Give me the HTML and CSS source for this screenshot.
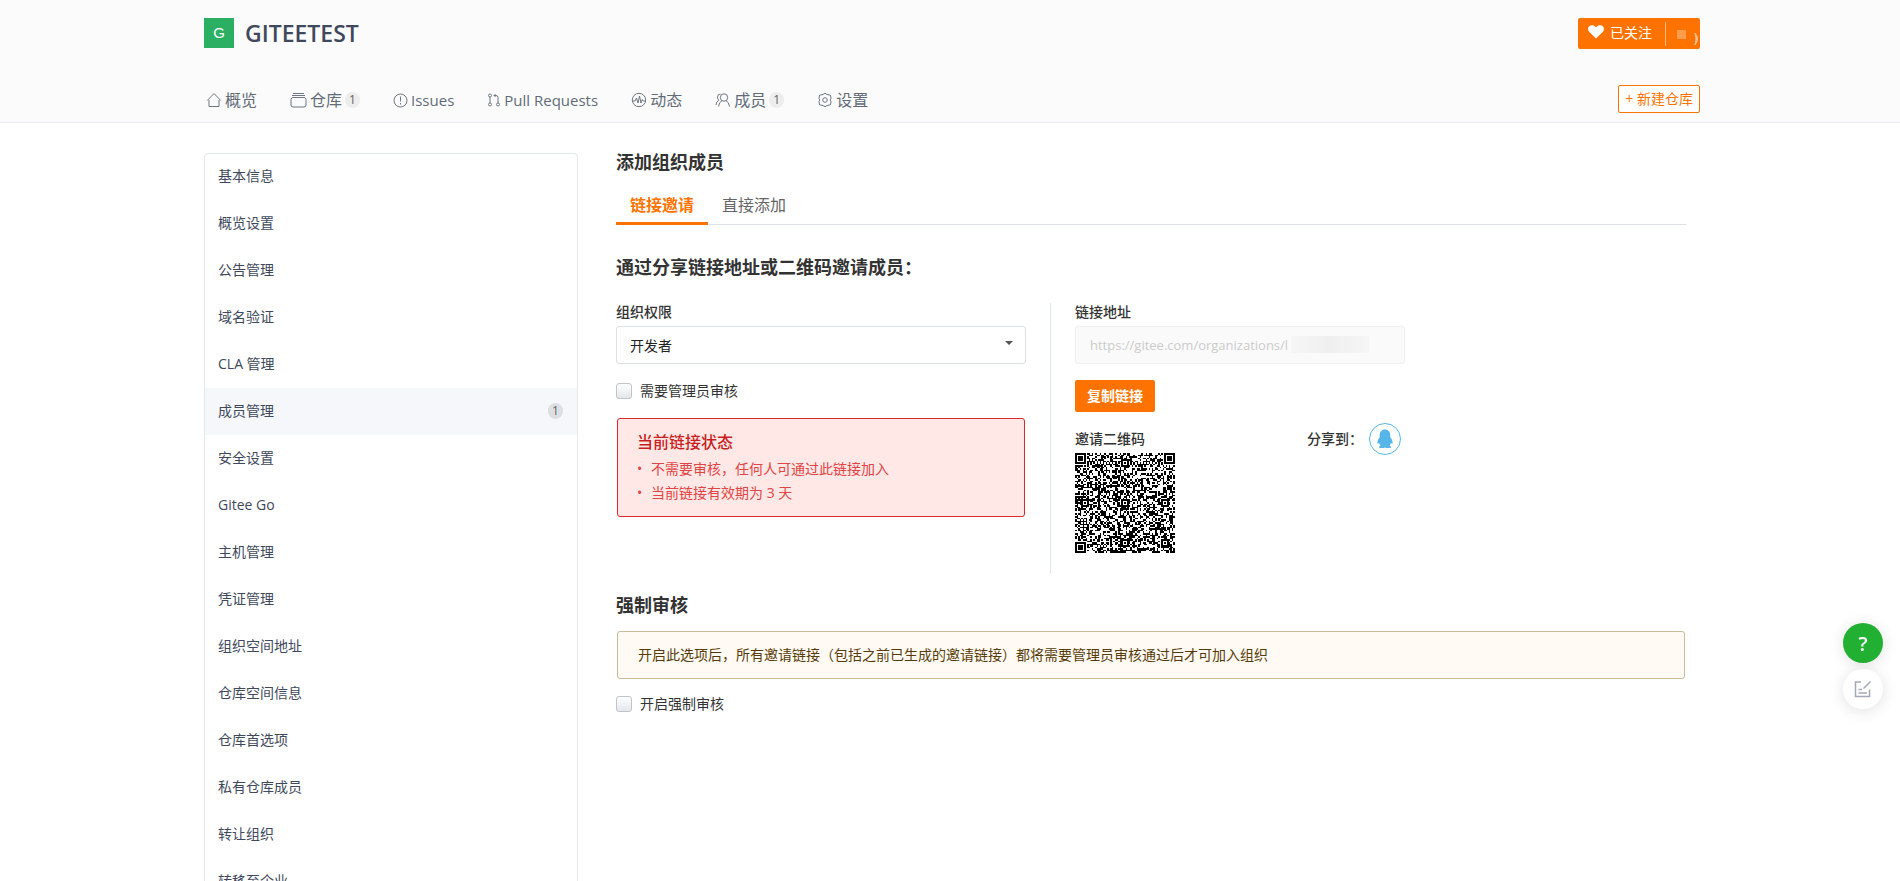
FILE: index.html
```
<!DOCTYPE html>
<html lang="zh-CN">
  <head>
    <meta charset="UTF-8" />
    <meta name="viewport" content="width=device-width, initial-scale=1.0" />
    <title>添加组织成员 - GITEETEST</title>
    <link rel="stylesheet" href="styles.css" />
  </head>
  <body>
    <header class="group-header">
      <div class="container">
        <div class="header-top">
          <h1 class="group-title"><span class="avatar">G</span><a href="#">GITEETEST</a></h1>
          <div class="follow">
            <button class="follow-btn" type="button">
              <svg width="16" height="14" viewBox="0 0 16 14" fill="#fff"><path d="M8 13.5 1.3 7C-.4 5.200-.3 2.600 1.200 1.200 3-.4 6-.3 8 2.200c2-2.500 5-2.600 6.800-1 1.500 1.400 1.600 4-.1 5.800z" /></svg>
              已关注
            </button>
            <button class="follow-count" type="button" aria-label="关注人数">
              <svg width="22" height="24" viewBox="0 0 22 24"><rect x="0" y="8" width="9" height="9" fill="#ff9d4d" /><path d="M18 11q5 5.500 0 12 2-6 0-12z" fill="#ffc18f" stroke="#ffc18f" /></svg>
            </button>
          </div>
        </div>
        <div class="header-bottom">
          <nav class="nav">
            <a href="#"><svg width="16" height="16" viewBox="0 0 16 16"><path d="M3 8v6.500h10V8M1.200 8.500 8 1.500l6.800 7" /></svg>概览</a>
            <a href="#"><svg width="17" height="16" viewBox="0 0 17 16"><path d="M3 1.500h11M2 3.500h13" /><rect x="1" y="5.500" width="15" height="9.500" rx="2" /></svg>仓库<span class="badge">1</span></a>
            <a href="#" class="latin"><svg width="15" height="16" viewBox="0 0 15 16"><circle cx="7.500" cy="8.500" r="6.500" /><path d="M7.500 4.500v5M7.500 11v1.500" /></svg>Issues</a>
            <a href="#" class="latin"><svg width="14" height="16" viewBox="0 0 14 16"><circle cx="3" cy="3.500" r="1.500" /><circle cx="3" cy="12.500" r="1.500" /><circle cx="11" cy="12.500" r="1.500" /><path d="M3 5v6M11 11V5.500q0-2-2-2H7M8.500 2 7 3.500 8.500 5" /></svg>Pull Requests</a>
            <a href="#"><svg width="16" height="16" viewBox="0 0 16 16"><circle cx="8" cy="8" r="6.700" /><path d="M1.500 9H4l1.500-3L7 11l1.500-7L10 11l1.300-3.500.9 1.500h2.300" /></svg>动态</a>
            <a href="#"><svg width="16" height="16" viewBox="0 0 16 16"><circle cx="9" cy="5.500" r="3.700" /><path d="M3.500 14.500q.5-4.500 3.500-5.700M14.500 14.500q-.5-4.500-3.500-5.700M5.500 2Q2.500 2 2.500 5q0 2 1.300 3.200Q1.200 9.500 1 13" /></svg>成员<span class="badge">1</span></a>
            <a href="#"><svg width="16" height="16" viewBox="0 0 16 16"><path d="m8 1.200 2 1.300 3.500.7.500 3.300-.9 1.500.9 1.500-.5 3.300-3.500.7-2 1.300-2-1.300-3.500-.7L2 9.500 2.900 8 2 6.500l.5-3.300L6 2.500z" /><circle cx="8" cy="8" r="2.300" /></svg>设置</a>
          </nav>
          <a href="#" class="new-repo">+ 新建仓库</a>
        </div>
      </div>
    </header>

    <div class="container main">
      <aside class="sidebar">
        <a href="#">基本信息</a>
        <a href="#">概览设置</a>
        <a href="#">公告管理</a>
        <a href="#">域名验证</a>
        <a href="#">CLA 管理</a>
        <a href="#" class="active">成员管理<span class="badge">1</span></a>
        <a href="#">安全设置</a>
        <a href="#">Gitee Go</a>
        <a href="#">主机管理</a>
        <a href="#">凭证管理</a>
        <a href="#">组织空间地址</a>
        <a href="#">仓库空间信息</a>
        <a href="#">仓库首选项</a>
        <a href="#">私有仓库成员</a>
        <a href="#">转让组织</a>
        <a href="#">转移至企业</a>
      </aside>

      <main class="content">
        <h2>添加组织成员</h2>
        <div class="tabs">
          <a href="#" class="active">链接邀请</a>
          <a href="#">直接添加</a>
        </div>

        <h2>通过分享链接地址或二维码邀请成员：</h2>
        <div class="invite">
          <div class="invite-left">
            <label class="field-label" for="role">组织权限</label>
            <div class="select-wrap">
              <select id="role">
                <option>开发者</option>
                <option>管理员</option>
              </select>
            </div>
            <div class="check">
              <input type="checkbox" id="need-check" />
              <label for="need-check">需要管理员审核</label>
            </div>
            <div class="status">
              <h3>当前链接状态</h3>
              <ul>
                <li>不需要审核，任何人可通过此链接加入</li>
                <li>当前链接有效期为 3 天</li>
              </ul>
            </div>
          </div>
          <div class="invite-right">
            <label class="field-label" for="link">链接地址</label>
            <div class="link-wrap">
              <input type="text" id="link" value="https://gitee.com/organizations/l" disabled />
              <span class="link-mask"></span>
            </div>
            <button class="copy-btn" type="button">复制链接</button>
            <div class="share-row">
              <div class="qr">
                <span class="field-label">邀请二维码</span>
                <svg id="qrcode" width="100" height="100" viewBox="0 0 65 65" shape-rendering="crispEdges"></svg>
              </div>
              <div class="share">
                <span class="share-label">分享到：</span>
                <a href="#" class="qq" aria-label="QQ">
                  <svg width="18" height="20" viewBox="0 0 18 20" fill="#56b6e7"><path d="M9 .5c3.400 0 5.300 2.500 5.300 5.500v2.200c1.600 2 2.500 4 2.300 5.800-.1 1-.9.900-1.600-.3-.3 1.200-.7 2-1.400 2.800 1.200.5 1.500 1.200 1.200 1.900-.5.900-4.300.9-5.800 0-1.500.9-5.300.9-5.800 0-.3-.7 0-1.400 1.200-1.900-.7-.8-1.100-1.600-1.400-2.800-.7 1.200-1.500 1.300-1.600.3-.2-1.800.7-3.800 2.300-5.800V6C3.700 3 5.600.5 9 .5z" /></svg>
                </a>
              </div>
            </div>
          </div>
        </div>

        <h2>强制审核</h2>
        <div class="notice">开启此选项后，所有邀请链接（包括之前已生成的邀请链接）都将需要管理员审核通过后才可加入组织</div>
        <div class="check">
          <input type="checkbox" id="force-check" />
          <label for="force-check">开启强制审核</label>
        </div>
      </main>
    </div>

    <div class="float-tools">
      <button class="help" type="button">?</button>
      <button class="feedback" type="button" aria-label="反馈">
        <svg width="18" height="18" viewBox="0 0 18 18" fill="none" stroke="#a4a9b8" stroke-width="1.500"><path d="M7 2H1.500v14.500h14V9.500M9.500 8.500l7-7M4.500 9.500H8M4.500 13h8.500" /></svg>
      </button>
    </div>

    <script src="script.js"></script>
  </body>
</html>
```

FILE: styles.css
```
* {
  box-sizing: border-box;
}

body {
  margin: 0;
  font-family: "Open Sans", "Noto Sans CJK SC", sans-serif;
  font-size: 14px;
  line-height: 20px;
  color: #333;
  background: #fff;
}

a {
  color: inherit;
  text-decoration: none;
}

button,
input,
select {
  font-family: inherit;
}

h2 {
  margin: 0;
  font-size: 18px;
  line-height: 24px;
  font-weight: bold;
}

.container {
  max-width: 1500px;
  margin: 0 auto;
  padding-left: 4px;
}

/* Header */
.group-header {
  background: #fbfbfb;
  border-bottom: 1px solid #e6e9ed;
}

.header-top {
  display: flex;
  justify-content: space-between;
  align-items: flex-start;
  height: 50px;
  padding-top: 18px;
}

.group-title {
  display: flex;
  align-items: center;
  gap: 11px;
  margin: 0;
  font-size: 23px;
  line-height: 30px;
  font-weight: 600;
  color: #40485b;
}

.avatar {
  width: 30px;
  height: 30px;
  background: #2baf63;
  color: #fff;
  font-size: 15px;
  font-weight: normal;
  line-height: 30px;
  text-align: center;
  font-family: "Liberation Sans", sans-serif;
}

.follow {
  display: flex;
  align-items: center;
  height: 31px;
  border-radius: 2px;
  background: #fe7300;
}

.follow-btn {
  display: flex;
  align-items: center;
  gap: 6px;
  height: 24px;
  padding: 0 13px 4px 10px;
  border: none;
  border-right: 1px solid #ffb980;
  background: none;
  color: #fff;
  font-size: 14px;
  white-space: nowrap;
}

.follow-count {
  height: 24px;
  padding: 0 1px 0 11px;
  border: none;
  background: none;
}

.follow-count svg {
  display: block;
}

.header-bottom {
  display: flex;
  justify-content: space-between;
  align-items: flex-start;
  height: 72px;
  padding-top: 35px;
}

.nav {
  display: flex;
  gap: 33px;
  padding-left: 2px;
  font-size: 16px;
  line-height: 30px;
  color: #626b77;
}

.nav a {
  display: flex;
  align-items: center;
  gap: 3px;
}

.nav .latin {
  font-size: 15px;
}

.nav svg {
  fill: none;
  stroke: #6f7782;
  stroke-width: 1;
}

.badge {
  width: 15px;
  height: 16px;
  border-radius: 8px;
  background: #ededed;
  font-size: 12px;
  line-height: 16px;
  text-align: center;
  color: #666;
}

.new-repo {
  height: 28px;
  padding: 0 6px;
  border: 1px solid #fe7300;
  border-radius: 2px;
  background: #fff;
  color: #fe7300;
  line-height: 26px;
}

/* Page body */
.main {
  display: flex;
  align-items: flex-start;
  height: calc(100vh - 123px);
  padding-top: 30px;
  overflow: hidden;
}

.sidebar {
  width: 25%;
  border: 1px solid #e3e9ed;
  border-radius: 4px;
  color: #40485b;
}

.sidebar a {
  display: flex;
  justify-content: space-between;
  align-items: center;
  height: 47px;
  padding: 0 14px 2px 13px;
}

.sidebar a:first-child {
  height: 46px;
}

.sidebar .active {
  background: #f5f7fa;
}

.sidebar .badge {
  background: #dcdfe3;
}

.content {
  flex: 1;
  margin-top: -3px;
  padding: 0 14px 0 38px;
}

.tabs {
  display: flex;
  margin: 13px 0 30px;
  border-bottom: 1px solid #dce3e8;
  font-size: 16px;
  line-height: 22px;
  color: #666;
}

.tabs a {
  margin-bottom: -1px;
  padding: 7px 14px 6px;
  border-bottom: 3px solid transparent;
}

.tabs .active {
  border-bottom-color: #fe7300;
  color: #fe7300;
  font-weight: bold;
}

.invite {
  display: flex;
  margin: 24px 0 19px;
}

.invite-left {
  width: 435px;
  padding-right: 24px;
  border-right: 1px solid #dfe6ec;
  min-height: 271px;
}

.invite-right {
  width: 354px;
  padding-left: 24px;
}

.field-label {
  display: block;
  line-height: 18px;
  font-weight: 500;
}

.select-wrap {
  position: relative;
  margin: 5px 0 16px;
}

/* Caret of the dropdown */
.select-wrap::after {
  content: "";
  position: absolute;
  right: 13px;
  top: 15px;
  border: 4px solid transparent;
  border-top-color: #555;
  border-bottom: none;
}

select {
  appearance: none;
  display: block;
  width: 100%;
  height: 38px;
  padding: 0 13px;
  border: 1px solid #dce0e8;
  border-radius: 3px;
  background: #fff;
  color: #222;
  font-size: 14px;
}

.check {
  display: flex;
  align-items: center;
  gap: 8px;
  height: 22px;
}

.check input {
  appearance: none;
  width: 16px;
  height: 16px;
  margin: 0;
  border: 1px solid #c1c4c9;
  border-radius: 3px;
  background: linear-gradient(#fff, #e3e6eb);
}

.status {
  margin: 16px 1px 0;
  padding: 12px 19px 11px;
  border: 1px solid #db2828;
  border-radius: 3px;
  background: #ffe8e6;
  color: #e04545;
}

.status h3 {
  margin: 0 0 4px;
  font-size: 16px;
  line-height: 22px;
  font-weight: 500;
  color: #c81e1e;
}

.status ul {
  margin: 0;
  padding-left: 14px;
  line-height: 24px;
  list-style: none;
}

.status li::before {
  content: "•";
  float: left;
  margin-left: -14px;
}

.link-wrap {
  position: relative;
  margin: 5px 0 16px;
}

.link-wrap input {
  display: block;
  width: 100%;
  height: 38px;
  padding: 0 14px;
  border: 1px solid #eef0f2;
  border-radius: 3px;
  background: #fafafa;
  color: #ccc;
  font-size: 13px;
}

.link-mask {
  position: absolute;
  left: 216px;
  top: 10px;
  width: 78px;
  height: 17px;
  background: linear-gradient(90deg, #f6f6f6, #efefef 50%, #f6f6f6);
}

.copy-btn {
  display: block;
  height: 32px;
  padding: 0 12px 2px;
  border: none;
  border-radius: 2px;
  background: #fe7300;
  color: #fff;
  font-size: 14px;
  font-weight: bold;
}

.share-row {
  display: flex;
  justify-content: space-between;
  margin-top: 11px;
  padding-right: 4px;
}

.qr {
  padding-top: 7px;
}

.qr svg {
  display: block;
  margin-top: 5px;
}

.share {
  display: flex;
  align-items: flex-start;
  gap: 6px;
}

.share-label {
  line-height: 32px;
  font-weight: 500;
}

.qq {
  display: flex;
  align-items: center;
  justify-content: center;
  width: 32px;
  height: 32px;
  border: 1px solid #56b6e7;
  border-radius: 50%;
}

.notice {
  margin: 14px 1px;
  padding: 13px 20px;
  border: 1px solid #c9ba9b;
  border-radius: 3px;
  background: #fffaf3;
  color: #573a08;
}

/* Floating buttons */
.float-tools {
  position: fixed;
  right: 17px;
  bottom: 172px;
  display: flex;
  flex-direction: column;
  gap: 6px;
}

.float-tools button {
  display: flex;
  align-items: center;
  justify-content: center;
  width: 40px;
  height: 40px;
  padding: 0;
  border: none;
  border-radius: 50%;
  background: #fff;
  box-shadow: 0 2px 16px rgba(0, 0, 0, 0.12);
}

.float-tools .help {
  background: #22b033;
  color: #fff;
  font-size: 20px;
  font-weight: 600;
}
```

FILE: script.js
```
// Draws the invite QR code
var size = 65;
var centers = [6, 32, 58];
var seed = 20;

function random() {
  seed = (seed * 1103515245 + 12345) % 2147483648;
  return seed / 2147483648;
}

// distance from the centre of a finder or alignment pattern
function ring(x, y, cx, cy) {
  return Math.max(Math.abs(x - cx), Math.abs(y - cy));
}

function isDark(x, y) {
  var dark = random() < 0.5;
  var corners = [[3, 3], [size - 4, 3], [3, size - 4]];
  for (var i = 0; i < corners.length; i++) {
    var d = ring(x, y, corners[i][0], corners[i][1]);
    if (d <= 4) return d < 2 || d === 3;
  }
  for (var a = 0; a < 3; a++) {
    for (var b = 0; b < 3; b++) {
      if ((a === 0 && b !== 1) || (b === 0 && a === 2)) continue;
      var r = ring(x, y, centers[a], centers[b]);
      if (r <= 2) return r !== 1;
    }
  }
  if (x === 6 || y === 6) return (x + y) % 2 === 0;
  return dark;
}

var d = "";
for (var y = 0; y < size; y++) {
  for (var x = 0; x < size; x++) {
    if (isDark(x, y)) d += "M" + x + " " + y + "h1v1h-1z";
  }
}
var path = document.createElementNS("http://www.w3.org/2000/svg", "path");
path.setAttribute("d", d);
document.getElementById("qrcode").appendChild(path);
```
